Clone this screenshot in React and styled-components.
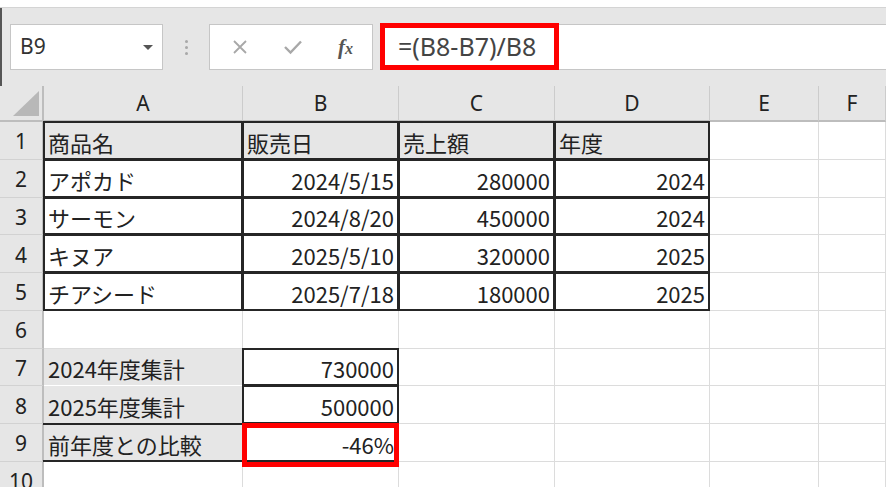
import React from 'react';
import styled, { createGlobalStyle } from 'styled-components';

const GlobalStyle = createGlobalStyle`
  html, body {
    margin: 0;
    padding: 0;
    background: #ffffff;
  }
  body {
    font-family: "Noto Sans CJK JP", "Noto Sans", sans-serif;
    overflow: hidden;
  }
`;

const Window = styled.div`
  width: 886px;
  height: 487px;
  overflow: hidden;
  background: #e6e6e6;
  display: flex;
  flex-direction: column;
`;

const TopStrip = styled.div`
  flex-shrink: 0;
  height: 7px;
  background: #ffffff;
  border-bottom: 1px solid #d4d4d4;
`;

const FormulaBar = styled.div`
  flex-shrink: 0;
  display: flex;
  align-items: center;
  height: 78px;
  padding-left: 8px;
  border-left: 2px solid #555555;
  box-sizing: border-box;
`;

const NameBox = styled.div`
  width: 153px;
  height: 46px;
  box-sizing: border-box;
  background: #ffffff;
  border: 1px solid #c6c6c6;
  display: flex;
  align-items: center;
  justify-content: space-between;
  padding: 0 9px 2px 9px;
  font-family: "Noto Sans", sans-serif;
  font-size: 21px;
  color: #333333;
`;

const DropArrow = styled.span`
  width: 0;
  height: 0;
  border-left: 5px solid transparent;
  border-right: 5px solid transparent;
  border-top: 5px solid #555555;
  margin-top: 2px;
`;

const Grip = styled.div`
  width: 46px;
  display: flex;
  flex-direction: column;
  align-items: center;
  gap: 3px;
`;

const GripDot = styled.span`
  width: 3px;
  height: 3px;
  border-radius: 50%;
  background: #a8a8a8;
`;

const ButtonBox = styled.div`
  width: 164px;
  height: 46px;
  box-sizing: border-box;
  background: #ffffff;
  border: 1px solid #c6c6c6;
  display: flex;
  align-items: center;
  padding-left: 3px;
`;

const BarButton = styled.span`
  width: 53px;
  display: flex;
  align-items: center;
  justify-content: center;
  color: ${p => p.$muted ? '#a8a8a8' : '#555555'};
`;

const Fx = styled.span`
  font-family: "Liberation Serif", serif;
  font-style: italic;
  font-weight: bold;
  font-size: 21px;
  color: #555555;
  & small {
    font-size: 16px;
  }
`;

const FormulaInput = styled.div`
  flex: 1;
  height: 46px;
  margin-left: 7px;
  box-sizing: border-box;
  background: #ffffff;
  border: 1px solid #c6c6c6;
  border-right: none;
  display: flex;
  align-items: stretch;
`;

const FormulaText = styled.span`
  width: 179px;
  box-sizing: border-box;
  margin: -2px 0 -1px -1px;
  border: 5px solid #ff0000;
  padding: 0 0 2px 13px;
  display: flex;
  align-items: center;
  font-family: "Noto Sans", sans-serif;
  font-size: 25px;
  color: #444444;
  white-space: nowrap;
`;

const Sheet = styled.div`
  flex-shrink: 0;
  display: grid;
  grid-template-columns: 44px 199px 156px 156px 155px 109px 1fr;
  grid-template-rows: 36px repeat(10, 37.75px);
  background: #ffffff;
  color: #222222;
  font-size: 22px;
`;

const Corner = styled.div`
  background: #e6e6e6;
  border-right: 2px solid #bdbdbd;
  border-bottom: 2px solid #bdbdbd;
  box-sizing: border-box;
  display: flex;
  align-items: flex-end;
  justify-content: flex-end;
  padding: 0 3px 4px 0;
`;

const ColHeader = styled.div`
  background: #e6e6e6;
  border-right: 1px solid #cccccc;
  border-bottom: 2px solid #bdbdbd;
  box-sizing: border-box;
  display: flex;
  align-items: center;
  justify-content: center;
  font-family: "Noto Sans", sans-serif;
  font-size: 21px;
`;

const RowHeader = styled.div`
  background: #e6e6e6;
  border-right: 2px solid #bdbdbd;
  border-bottom: 1px solid #d2d2d2;
  box-sizing: border-box;
  display: flex;
  align-items: center;
  justify-content: center;
  padding-top: 2px;
  font-family: "Noto Sans", sans-serif;
  font-size: 21px;
`;

const Cell = styled.div`
  position: relative;
  box-sizing: border-box;
  background: ${p => p.$fill ? '#e6e6e6' : '#ffffff'};
  border-right: 1px solid ${p => p.$fill ? '#ffffff' : '#dcdcdc'};
  border-bottom: 1px solid ${p => p.$fill ? '#ffffff' : '#dcdcdc'};
  display: flex;
  align-items: center;
  justify-content: ${p => p.$num ? 'flex-end' : 'flex-start'};
  padding: 3px 4px 0 4px;
  white-space: nowrap;
  overflow: visible;

  &::before {
    content: '';
    display: ${p => p.$frame ? 'block' : 'none'};
    position: absolute;
    inset: -1px;
    border-style: solid;
    border-color: #262626;
    border-width: ${p => (p.$frame || '0000').split('').map(v => v === '1' ? '2px' : '0').join(' ')};
    pointer-events: none;
    z-index: 1;
  }

  &::after {
    content: '';
    display: ${p => p.$marked ? 'block' : 'none'};
    position: absolute;
    inset: -1px -1px -6px -1px;
    border: 5px solid #ff0000;
    pointer-events: none;
    z-index: 2;
  }
`;

const columns = ['A', 'B', 'C', 'D', 'E', 'F'];

const rows = [
  [
    { v: '商品名', fill: true, frame: '1111' },
    { v: '販売日', fill: true, frame: '1111' },
    { v: '売上額', fill: true, frame: '1111' },
    { v: '年度', fill: true, frame: '1111' },
  ],
  [
    { v: 'アポカド', frame: '1111' },
    { v: '2024/5/15', num: true, frame: '1111' },
    { v: '280000', num: true, frame: '1111' },
    { v: '2024', num: true, frame: '1111' },
  ],
  [
    { v: 'サーモン', frame: '1111' },
    { v: '2024/8/20', num: true, frame: '1111' },
    { v: '450000', num: true, frame: '1111' },
    { v: '2024', num: true, frame: '1111' },
  ],
  [
    { v: 'キヌア', frame: '1111' },
    { v: '2025/5/10', num: true, frame: '1111' },
    { v: '320000', num: true, frame: '1111' },
    { v: '2025', num: true, frame: '1111' },
  ],
  [
    { v: 'チアシード', frame: '1111' },
    { v: '2025/7/18', num: true, frame: '1111' },
    { v: '180000', num: true, frame: '1111' },
    { v: '2025', num: true, frame: '1111' },
  ],
  [],
  [
    { v: '2024年度集計', fill: true },
    { v: '730000', num: true, frame: '1111' },
  ],
  [
    { v: '2025年度集計', fill: true },
    { v: '500000', num: true, frame: '1111' },
  ],
  [
    { v: '前年度との比較', fill: true, frame: '1010' },
    { v: '-46%', num: true, frame: '1111', marked: true },
  ],
  [],
];

function CrossIcon() {
  return (
    <svg width="16" height="16" viewBox="0 0 16 16">
      <path d="M2 2 L14 14 M14 2 L2 14" stroke="currentColor" strokeWidth="1.8" fill="none" />
    </svg>
  );
}

function CheckIcon() {
  return (
    <svg width="20" height="16" viewBox="0 0 20 16">
      <path d="M2 8 L7.5 13.5 L18 2.5" stroke="currentColor" strokeWidth="2.4" fill="none" />
    </svg>
  );
}

function CornerMark() {
  return (
    <svg width="26" height="25" viewBox="0 0 26 25">
      <polygon points="26,0 26,25 0,25" fill="#b8b8b8" />
    </svg>
  );
}

export default function App() {
  return (
    <>
      <GlobalStyle />
      <Window>
        <TopStrip />
        <FormulaBar>
          <NameBox>
            <span>B9</span>
            <DropArrow />
          </NameBox>
          <Grip>
            <GripDot />
            <GripDot />
            <GripDot />
          </Grip>
          <ButtonBox>
            <BarButton $muted><CrossIcon /></BarButton>
            <BarButton $muted><CheckIcon /></BarButton>
            <BarButton><Fx>f<small>x</small></Fx></BarButton>
          </ButtonBox>
          <FormulaInput>
            <FormulaText>=(B8-B7)/B8</FormulaText>
          </FormulaInput>
        </FormulaBar>
        <Sheet>
          <Corner><CornerMark /></Corner>
          {columns.map(c => <ColHeader key={c}>{c}</ColHeader>)}
          {rows.map((row, r) => (
            <React.Fragment key={r}>
              <RowHeader>{r + 1}</RowHeader>
              {columns.map((c, i) => {
                const cell = row[i];
                return (
                  <Cell
                    key={c}
                    $fill={cell?.fill}
                    $num={cell?.num}
                    $frame={cell?.frame}
                    $marked={cell?.marked}
                  >
                    {cell?.v}
                  </Cell>
                );
              })}
            </React.Fragment>
          ))}
        </Sheet>
      </Window>
    </>
  );
}
